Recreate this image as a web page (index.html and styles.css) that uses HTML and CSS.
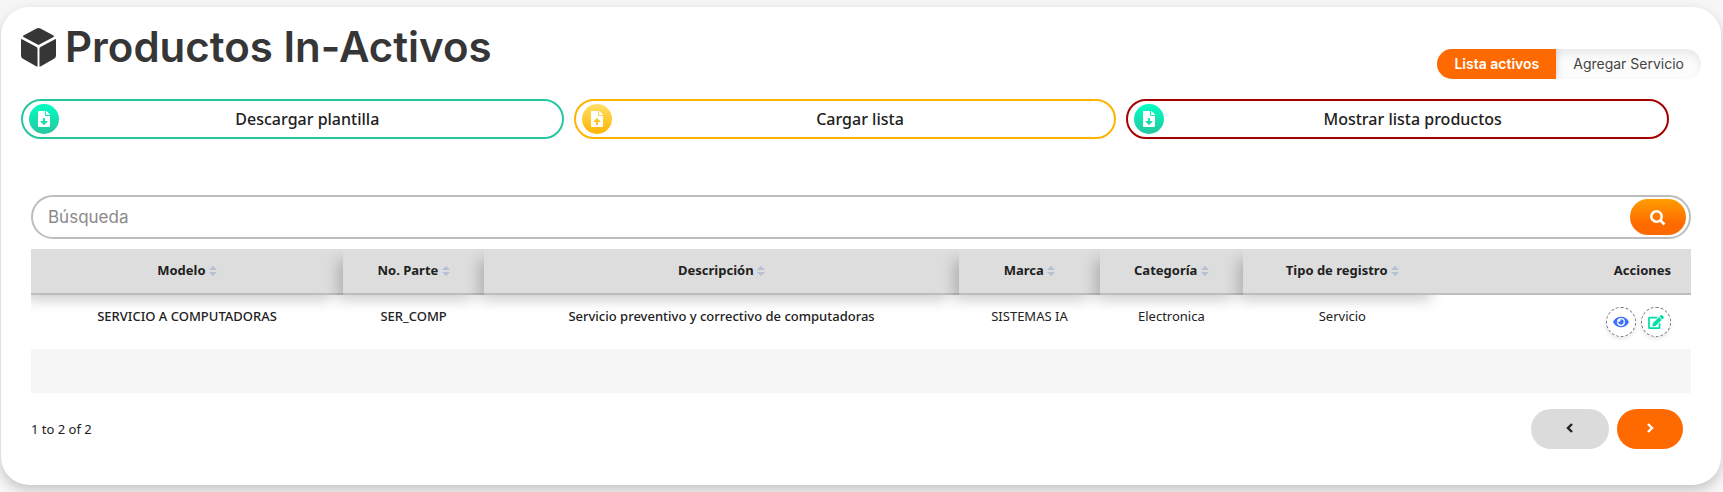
FILE: index.html
```html
<!DOCTYPE html>
<html lang="es">
<head>
    <meta charset="UTF-8">
    <meta name="viewport" content="width=device-width, initial-scale=1.0">
    <title>Productos In-Activos</title>
    <link rel="stylesheet" href="styles.css">
</head>
<body>
    <!-- iconos -->
    <svg class="sprite" aria-hidden="true">
        <symbol id="i-down" viewBox="0 0 384 512">
            <path fill-rule="evenodd" d="M224 136V0H24C11 0 0 11 0 24v464c0 13 11 24 24 24h336c13 0 24-11 24-24V160H248c-13 0-24-11-24-24zm77 209-96 95c-7 7-19 7-26 0l-96-95c-10-10-3-27 11-27h66v-78c0-9 7-16 16-16h32c9 0 16 7 16 16v78h66c14 0 21 17 11 27zM377 105 279 7c-5-5-11-7-17-7h-6v128h128v-6c0-6-3-13-7-17z"/>
        </symbol>
        <symbol id="i-up" viewBox="0 0 384 512">
            <path fill-rule="evenodd" d="M224 136V0H24C11 0 0 11 0 24v464c0 13 11 24 24 24h336c13 0 24-11 24-24V160H248c-13 0-24-11-24-24zm66 216h-66v80c0 9-7 16-16 16h-32c-9 0-16-7-16-16v-80H94c-14 0-21-17-11-27l96-96c7-7 19-7 26 0l96 96c10 10 3 27-11 27zM377 105 279 7c-5-5-11-7-17-7h-6v128h128v-6c0-6-3-13-7-17z"/>
        </symbol>
        <symbol id="i-sort" viewBox="0 0 8 10">
            <path d="M4 0l4 4H0zM4 10L0 6h8z"/>
        </symbol>
    </svg>

    <div class="card">
        <header class="head">
            <h1 class="title">
                <svg viewBox="0 0 36 40" aria-hidden="true">
                    <path d="M16 1q2-1 4 0l13 7q2 1 0 2L18 18 3 10q-2-1 0-2zM1 12l15 8q1 1 1 2v18q0 0-1 0L2 32q-2-1-2-3V13q0-2 1-1zM35 12q1-1 1 1v16q0 2-2 3l-14 8q-1 0-1 0V22q0-1 1-2z"/>
                </svg>
                Productos In-Activos
            </h1>
            <nav class="tabs">
                <a class="tab active" href="#">Lista activos</a>
                <a class="tab" href="#">Agregar Servicio</a>
            </nav>
        </header>

        <div class="options">
            <button class="option green" type="button">
                <span class="dot"><svg><use href="#i-down"/></svg></span>
                <span class="text">Descargar plantilla</span>
            </button>
            <button class="option yellow" type="button">
                <span class="dot"><svg><use href="#i-up"/></svg></span>
                <span class="text">Cargar lista</span>
            </button>
            <button class="option red" type="button">
                <span class="dot"><svg><use href="#i-down"/></svg></span>
                <span class="text">Mostrar lista productos</span>
            </button>
        </div>

        <main class="content">
            <form class="search">
                <input type="text" placeholder="Búsqueda" aria-label="Búsqueda">
                <button type="button" aria-label="Buscar">
                    <svg viewBox="0 0 16 16"><circle cx="6.5" cy="6.5" r="5.2"/><path d="M10.5 10.5l4 4"/></svg>
                </button>
            </form>

            <table class="table">
                <colgroup>
                    <col class="c-modelo"><col class="c-parte"><col class="c-desc"><col class="c-marca"><col class="c-cat"><col class="c-tipo"><col>
                </colgroup>
                <thead>
                    <tr>
                        <th>Modelo <svg><use href="#i-sort"/></svg></th>
                        <th>No. Parte <svg><use href="#i-sort"/></svg></th>
                        <th>Descripción <svg><use href="#i-sort"/></svg></th>
                        <th>Marca <svg><use href="#i-sort"/></svg></th>
                        <th>Categoría <svg><use href="#i-sort"/></svg></th>
                        <th>Tipo de registro <svg><use href="#i-sort"/></svg></th>
                        <th class="last">Acciones</th>
                    </tr>
                </thead>
                <tbody>
                    <tr>
                        <td class="strong">SERVICIO A COMPUTADORAS</td>
                        <td class="strong">SER_COMP</td>
                        <td class="strong">Servicio preventivo y correctivo de computadoras</td>
                        <td>SISTEMAS IA</td>
                        <td>Electronica</td>
                        <td>Servicio</td>
                        <td class="last">
                            <div class="actions">
                                <button class="view" type="button" aria-label="Ver">
                                    <svg viewBox="0 0 576 512"><path fill-rule="evenodd" d="M572 241C518 136 411 64 288 64S58 136 4 241a32 32 0 0 0 0 29c54 106 161 178 284 178s230-72 284-177a32 32 0 0 0 0-30zM288 400a144 144 0 1 1 0-288 144 144 0 0 1 0 288zm0-240a95 95 0 0 0-25 4 48 48 0 0 1-67 67 96 96 0 1 0 92-71z"/></svg>
                                </button>
                                <button class="edit" type="button" aria-label="Editar">
                                    <svg viewBox="0 0 576 512"><path d="M403 83l90 90c4 4 4 10 0 14L274 406l-93 10c-12 2-23-9-21-21l10-93L389 83c4-4 10-4 14 0zm162-23l-49-49c-15-15-40-15-55 0l-35 36c-4 4-4 10 0 14l90 90c4 4 10 4 14 0l35-36c15-15 15-40 0-55zM384 346v102H64V128h230c3 0 6-1 8-4l40-40c8-7 3-20-8-20H48C22 64 0 86 0 112v352c0 27 22 48 48 48h352c27 0 48-21 48-48V306c0-11-13-16-20-9l-40 40c-3 3-4 6-4 9z"/></svg>
                                </button>
                            </div>
                        </td>
                    </tr>
                    <tr class="empty">
                        <td colspan="7"></td>
                    </tr>
                </tbody>
            </table>

            <footer class="pager">
                <span>1 to 2 of 2</span>
                <div class="pages">
                    <button class="prev" type="button" aria-label="Anterior"><svg viewBox="0 0 8 12"><path d="M6 2L2 6l4 4"/></svg></button>
                    <button class="next" type="button" aria-label="Siguiente"><svg viewBox="0 0 8 12"><path d="M2 2l4 4-4 4"/></svg></button>
                </div>
            </footer>
        </main>
    </div>
</body>
</html>
```

FILE: styles.css
```css
*{
    padding: 0;
    margin: 0;
    box-sizing: border-box;
}
body{
    background: #f6f6f6;
    color: #212121;
    font-family: "Noto Sans", "Open Sans", sans-serif;
    font-size: 13px;
    overflow: hidden;
}
button{
    border: none;
    font: inherit;
    color: inherit;
    cursor: pointer;
}
svg{
    fill: currentColor;
}
.sprite{
    position: absolute;
    width: 0;
    height: 0;
}

.card{
    margin: 7px 2px 7px 1px;
    padding: 17px 20px 36px;
    background: #fff;
    border-radius: 28px;
    box-shadow: 0 5px 12px rgba(0, 0, 0, .2);
}

/* encabezado */
.head{
    display: flex;
    justify-content: space-between;
    align-items: flex-end;
    height: 55px;
}
.title{
    display: flex;
    align-items: center;
    align-self: flex-start;
    gap: 9px;
    color: #363636;
    font-family: Inter, sans-serif;
    font-size: 42px;
    font-weight: 600;
    line-height: 46px;
}
.title svg{
    width: 35px;
    height: 40px;
}
.tabs{
    display: flex;
    height: 30px;
    border-radius: 15px;
    overflow: hidden;
    font-family: Inter, sans-serif;
    font-size: 14px;
    line-height: 30px;
    background: #fcfcfc;
    box-shadow: inset 0 5px 8px rgba(0, 0, 0, .08);
}
.tab{
    padding: 0 17px;
    color: #444;
    text-decoration: none;
}
.tab.active{
    background: #ff6a00;
    color: #fff;
    font-weight: 600;
    box-shadow: 0 0 8px rgba(0, 0, 0, .2);
}

/* opciones */
.options{
    display: flex;
    gap: 10px;
    margin: 20px 32px 0 0;
}
.option{
    display: flex;
    align-items: center;
    flex: 1;
    height: 40px;
    padding: 0 6px;
    background: #fff;
    border: 2px solid;
    border-radius: 20px;
}
.option .text{
    flex: 1;
    color: #212121;
    font-size: 16px;
    font-weight: 500;
}
.dot{
    display: flex;
    align-items: center;
    justify-content: center;
    width: 30px;
    height: 30px;
    border-radius: 50%;
    background: linear-gradient(#00ffc4, #26c6a0);
    color: #fff;
}
.dot svg{
    width: 12px;
    height: 16px;
}
.green{
    border-color: #26c6a0;
}
.yellow{
    border-color: #ffb400;
}
.yellow .dot{
    background: linear-gradient(#ffe066, #ffb400);
}
.red{
    border-color: #a60000;
}

/* busqueda */
.content{
    padding: 56px 10px 0;
}
.search{
    display: flex;
    align-items: center;
    height: 44px;
    padding: 0 3px 0 15px;
    border: 2px solid #bdbdbd;
    border-radius: 22px;
}
.search input{
    flex: 1;
    border: none;
    outline: none;
    background: none;
    font-family: Inter, sans-serif;
    font-size: 17px;
}
.search input::placeholder{
    color: #8a8a8a;
}
.search button{
    width: 56px;
    height: 36px;
    border-radius: 18px;
    background: linear-gradient(#ff9d00, #ff6a00 70%);
    color: #fff;
}
.search svg{
    width: 16px;
    height: 16px;
    fill: none;
    stroke: currentColor;
    stroke-width: 2.6;
    vertical-align: middle;
}

/* tabla */
.table{
    width: 100%;
    margin-top: 10px;
    border-collapse: separate;
    border-spacing: 0;
    table-layout: fixed;
    clip-path: inset(0);
}
.c-modelo{ width: 18.8%; }
.c-parte{ width: 8.5%; }
.c-desc{ width: 28.6%; }
.c-marca{ width: 8.5%; }
.c-cat{ width: 8.6%; }
.c-tipo{ width: 12%; }

.table th{
    height: 46px;
    padding-bottom: 2px;
    background: #ddd;
    border-bottom: 2px solid #bdbdbd;
    box-shadow: -8px 8px 14px -3px rgba(0, 0, 0, .2);
    font-weight: 700;
}
.table th svg{
    width: 8px;
    height: 10px;
    fill: #b4c0d3;
    vertical-align: -1px;
}
.table td{
    height: 54px;
    padding-top: 12px;
    text-align: center;
    vertical-align: top;
    line-height: 18px;
}
.table .strong{
    font-weight: 500;
}
.table .last{
    padding-right: 20px;
    text-align: right;
    box-shadow: none;
}
.table .empty td{
    height: 44px;
    padding: 0;
    background: #f6f6f6;
}
.actions{
    display: flex;
    justify-content: flex-end;
    gap: 5px;
}
.actions button{
    display: flex;
    align-items: center;
    justify-content: center;
    width: 30px;
    height: 30px;
    background: #fff;
    border: 1px dashed #777;
    border-radius: 50%;
    box-shadow: 0 2px 4px rgba(0, 0, 0, .1);
}
.actions svg{
    width: 16px;
    height: 14px;
}
.view svg{
    fill: #3b71fe;
}
.edit svg{
    fill: #00dfa8;
}

/* paginacion */
.pager{
    display: flex;
    justify-content: space-between;
    align-items: center;
    margin-top: 16px;
    padding-right: 8px;
}
.pages{
    display: flex;
    gap: 8px;
}
.pages button{
    height: 40px;
    border-radius: 20px;
}
.pages svg{
    width: 8px;
    height: 12px;
    fill: none;
    stroke: currentColor;
    stroke-width: 2.4;
}
.prev{
    width: 78px;
    background: #dbdbdb;
}
.next{
    width: 66px;
    background: #ff6a00;
    color: #fff;
}
```
